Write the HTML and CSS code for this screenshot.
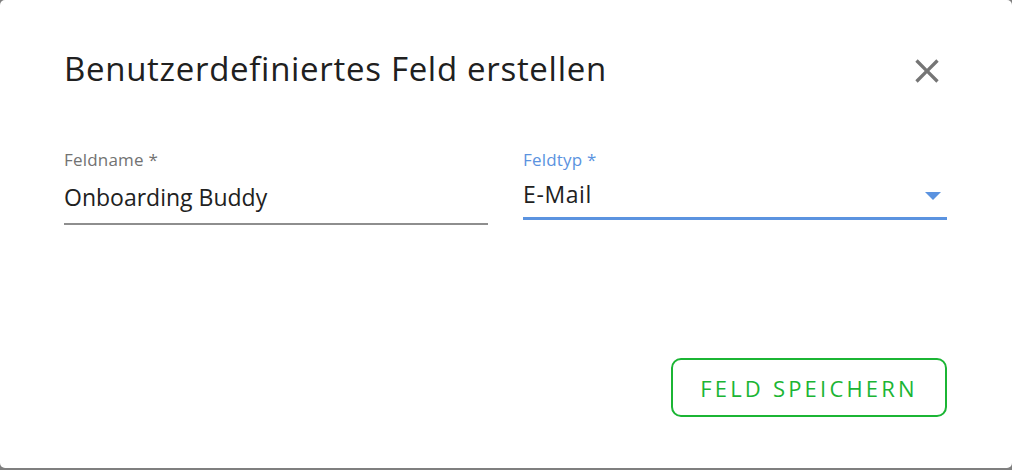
FILE: index.html
```html
<!DOCTYPE html>
<html lang="de">
<head>
<meta charset="utf-8">
<title>Benutzerdefiniertes Feld erstellen</title>
<link rel="stylesheet" href="styles.css">
</head>
<body>
<div class="dialog">
  <div class="header">
    <h2 class="title">Benutzerdefiniertes Feld erstellen</h2>
    <button class="close" aria-label="Schließen">
      <svg width="40" height="40" viewBox="0 0 24 24"><path d="M19 6.41L17.59 5 12 10.59 6.41 5 5 6.41 10.59 12 5 17.59 6.41 19 12 13.41 17.59 19 19 17.59 13.41 12z" fill="#757575"/></svg>
    </button>
  </div>
  <div class="fields">
    <div class="field">
      <div class="label">Feldname *</div>
      <div class="input">Onboarding Buddy</div>
    </div>
    <div class="field">
      <div class="label label-focused">Feldtyp *</div>
      <div class="select">
        <span>E-Mail</span>
        <svg class="arrow" width="16" height="8" viewBox="0 0 16 8"><path d="M0 0h16L8 8z" fill="#5b93e0"/></svg>
      </div>
    </div>
  </div>
  <div class="footer">
    <button class="save">Feld speichern</button>
  </div>
</div>
</body>
</html>
```
FILE: styles.css
```css
html, body {
  margin: 0;
  padding: 0;
}
body {
  background: #7f7f7f;
  font-family: "Open Sans", "Lato", sans-serif;
  width: 1012px;
  height: 470px;
  overflow: hidden;
}
.dialog {
  width: 1012px;
  height: 468px;
  box-sizing: border-box;
  background: #fff;
  border-radius: 5px;
  padding: 49px 65px 51px 64px;
  display: flex;
  flex-direction: column;
}
.header {
  display: flex;
  align-items: center;
  justify-content: space-between;
  height: 40px;
}
.title {
  margin: 0;
  font-size: 33px;
  line-height: 40px;
  letter-spacing: 0.7px;
  font-weight: 400;
  color: #202020;
}
.close {
  border: 0;
  background: none;
  padding: 0;
  margin-top: 3px;
  width: 40px;
  height: 40px;
  display: block;
}
.close svg { display: block; }
.fields {
  display: flex;
  gap: 35px;
  margin-top: 61px;
}
.field {
  flex: 1;
}
.label {
  font-size: 17px;
  line-height: 20px;
  letter-spacing: 0.2px;
  color: #727272;
}
.label-focused {
  color: #5b93e0;
}
.input {
  font-size: 23px;
  line-height: 30px;
  color: #212121;
  padding: 12px 0 11px;
  border-bottom: 2px solid #8e8e8e;
}
.select {
  display: flex;
  align-items: center;
  justify-content: space-between;
  font-size: 23px;
  line-height: 30px;
  letter-spacing: 0.6px;
  color: #212121;
  padding: 9px 0 8px;
  border-bottom: 3px solid #5b93e0;
}
.arrow {
  display: block;
  margin: 4px 6px 0 0;
}
.footer {
  margin-top: auto;
  display: flex;
  justify-content: flex-end;
}
.save {
  width: 276px;
  height: 59px;
  box-sizing: border-box;
  padding: 0;
  border: 2px solid #1bb534;
  border-radius: 10px;
  background: #fff;
  color: #1bb534;
  font-family: inherit;
  font-size: 22px;
  letter-spacing: 3.2px;
  text-transform: uppercase;
}
```
